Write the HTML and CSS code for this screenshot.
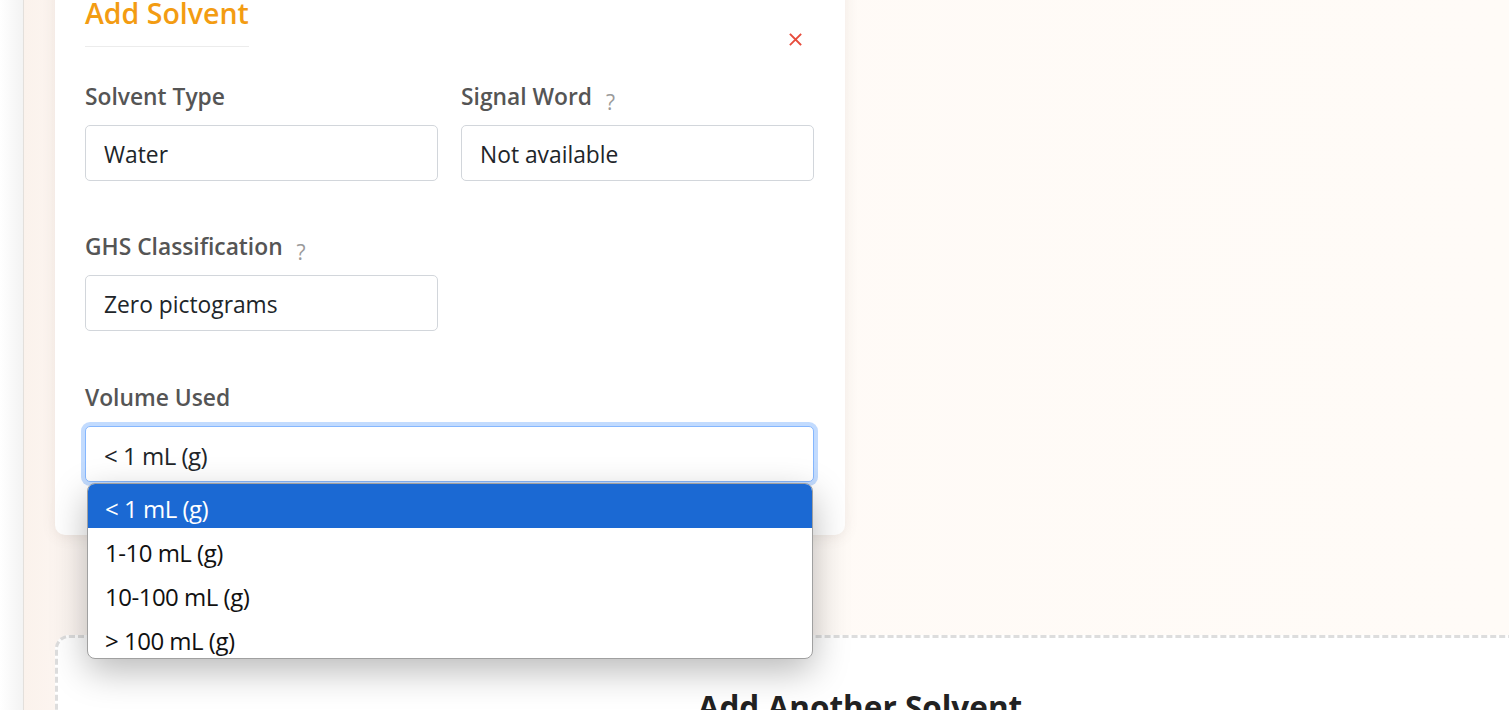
FILE: index.html
```html
<!DOCTYPE html>
<html lang="en">
<head>
<meta charset="utf-8">
<title>Add Solvent</title>
<link rel="stylesheet" href="styles.css">
</head>
<body>
<div class="page">
  <div class="rail"></div>
  <main class="main">
    <section class="card">
      <header class="card-head">
        <h2 class="card-title">Add Solvent</h2>
        <button class="close" type="button" aria-label="Close">
          <svg width="13" height="13" viewBox="0 0 13 13"><path d="M1.5 1.5 L11.5 11.5 M11.5 1.5 L1.5 11.5" stroke="#e74c3c" stroke-width="1.8" stroke-linecap="square"/></svg>
        </button>
      </header>
      <div class="form-grid">
        <div class="field">
          <label class="label">Solvent Type</label>
          <div class="input">Water</div>
        </div>
        <div class="field">
          <label class="label">Signal Word <span class="help">?</span></label>
          <div class="input">Not available</div>
        </div>
        <div class="field">
          <label class="label">GHS Classification <span class="help">?</span></label>
          <div class="input">Zero pictograms</div>
        </div>
        <div class="field"></div>
        <div class="field field-wide">
          <label class="label">Volume Used</label>
          <div class="select-wrap">
            <div class="input input-focus">&lt; 1 mL (g)</div>
            <ul class="options">
              <li class="option option-active">&lt; 1 mL (g)</li>
              <li class="option">1-10 mL (g)</li>
              <li class="option">10-100 mL (g)</li>
              <li class="option">&gt; 100 mL (g)</li>
            </ul>
          </div>
        </div>
      </div>
    </section>
    <section class="add-box">
      <h3 class="add-title">Add Another Solvent</h3>
    </section>
  </main>
</div>
</body>
</html>
```

FILE: styles.css
```css
* { box-sizing: border-box; }
html, body { margin: 0; padding: 0; }
body {
  width: 1509px;
  height: 710px;
  overflow: hidden;
  background: #ffffff;
  font-family: "Open Sans", "Noto Sans", sans-serif;
}
.page {
  display: flex;
  height: 710px;
}
.rail {
  width: 24px;
  flex: none;
  background: linear-gradient(90deg, #ffffff, #f3f3f3);
  border-right: 1px solid #e3dfdb;
}
.main {
  flex: 1;
  min-width: 0;
  padding-left: 31px;
  background: linear-gradient(90deg, #fbf2ec 0px, #fdf7f3 60px, #fffaf6 400px, #fffbf7 100%);
}
.card {
  width: 790px;
  margin-top: -40px;
  padding: 36px 31px 53px 30px;
  background: #ffffff;
  border-radius: 10px;
  box-shadow: 0 2px 14px rgba(120, 100, 90, 0.12);
  position: relative;
  z-index: 2;
}
.card-head {
  display: flex;
  justify-content: space-between;
  align-items: flex-end;
}
.card-title {
  margin: 0;
  display: inline-block;
  font-size: 28.5px;
  font-weight: 600;
  line-height: 34px;
  color: #f39c12;
  padding-bottom: 16px;
  border-bottom: 1px solid #ececec;
}
.close {
  border: 0;
  background: none;
  padding: 0;
  margin: 0 12px 1px 0;
  width: 13px;
  height: 13px;
  display: flex;
}
.form-grid {
  display: grid;
  grid-template-columns: 353px 353px;
  column-gap: 23px;
  margin-top: 34px;
}
.field {
  margin-bottom: 50px;
}
.field-wide {
  grid-column: 1 / 3;
  margin-bottom: 0;
  padding-top: 1px;
}
.label {
  display: block;
  height: 32px;
  font-size: 22.8px;
  font-weight: 600;
  line-height: 32px;
  color: #555555;
  margin-bottom: 12px;
  white-space: nowrap;
}
.help {
  font-size: 21px;
  font-weight: 400;
  line-height: 0;
  color: #9a9a9a;
  margin-left: 8px;
  position: relative;
  top: 5px;
}
.input {
  height: 56px;
  border: 1px solid #d2d6db;
  border-radius: 5px;
  padding: 2px 18px 0;
  font-size: 22.8px;
  line-height: 54px;
  color: #212529;
  background: #ffffff;
}
.select-wrap {
  position: relative;
}
.input-focus {
  font-size: 24px;
  letter-spacing: -0.5px;
  border-color: #86b7fe;
  box-shadow: 0 0 0 4px rgba(13, 110, 253, 0.25);
}
.options {
  list-style: none;
  margin: 0;
  padding: 0;
  position: absolute;
  left: 2px;
  top: 57px;
  width: 726px;
  height: 176px;
  background: #ffffff;
  border: 1px solid #a0a0a0;
  border-radius: 8px;
  overflow: hidden;
  box-shadow: 0 12px 36px rgba(0, 0, 0, 0.28);
  z-index: 5;
}
.option {
  height: 44px;
  line-height: 39px;
  padding: 5px 0 0 17px;
  font-size: 24px;
  color: #111111;
  letter-spacing: -0.5px;
}
.option-active {
  background: #1b69d3;
  color: #ffffff;
}
.add-box {
  width: 1610px;
  margin-top: 100px;
  height: 200px;
  border: 3px dashed #dddddd;
  border-radius: 14px;
  background: #ffffff;
  padding-top: 47px;
  text-align: center;
}
.add-title {
  margin: 0;
  font-size: 31.5px;
  font-weight: 700;
  color: #222222;
}
```
